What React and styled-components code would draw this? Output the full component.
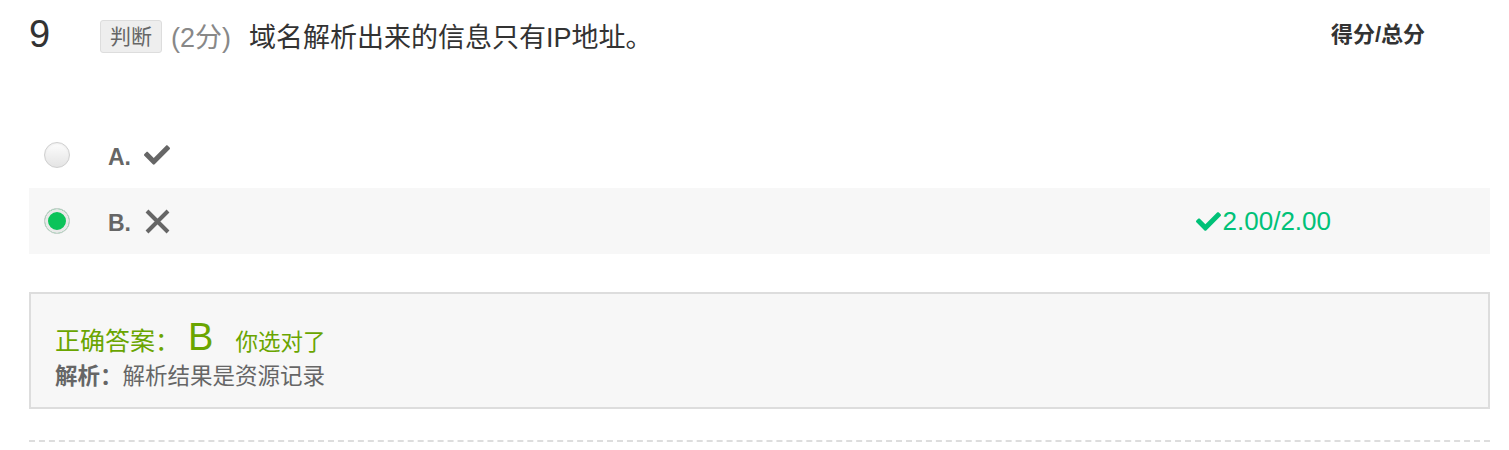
import React from 'react';
import styled, { createGlobalStyle } from 'styled-components';
import { FaCheck } from 'react-icons/fa';

const Global = createGlobalStyle`
  body {
    margin: 0;
    background: #fff;
    font-family: "Liberation Sans", "Noto Sans CJK SC", sans-serif;
  }
`;

const Wrap = styled.div`
  width: 1461px;
  margin-left: 29px;
`;

const Head = styled.div`
  display: flex;
  align-items: center;
  height: 40px;
  padding-top: 15px;
`;

const Num = styled.div`
  width: 71px;
  font-size: 38px;
  color: #333;
  line-height: 40px;
  margin-top: -2px;
`;

const Tag = styled.span`
  display: inline-block;
  font-size: 21px;
  line-height: 31px;
  padding: 0 9px;
  color: #666;
  background: #eee;
  border: 1px solid #ddd;
  border-radius: 3px;
  margin-right: 9px;
  margin-top: 3px;
`;

const Score = styled.span`
  font-size: 27px;
  color: #888;
  margin-right: 18px;
`;

const Title = styled.span`
  font-size: 27px;
  color: #333;
  flex: 1;
`;

const Total = styled.div`
  font-size: 22px;
  font-weight: bold;
  color: #333;
  margin-right: 65px;
  margin-top: -6px;
`;

const Options = styled.ul`
  list-style: none;
  margin: 67px 0 0;
  padding: 0;
`;

const Option = styled.li`
  display: flex;
  align-items: center;
  height: 66px;
  padding-left: 15px;
  background: ${p => (p.$shade ? '#f7f7f7' : 'transparent')};
`;

const Radio = styled.span`
  box-sizing: border-box;
  width: 26px;
  height: 26px;
  border-radius: 50%;
  border: 1px solid #cfcfcf;
  background: ${p => (p.$on ? '#0cc35a' : 'linear-gradient(#fdfdfd, #e4e4e4)')};
  box-shadow: ${p => (p.$on ? 'inset 0 0 0 3px #e9e9e9' : 'inset 0 1px 2px rgba(0,0,0,0.06)')};
  margin-right: 38px;
`;

const Letter = styled.span`
  font-size: 23px;
  font-weight: bold;
  color: #666;
  margin-right: 13px;
  padding-top: 4px;
`;

const Mark = styled.span`
  display: flex;
  color: #666;
  flex: 1;
`;

const Got = styled.div`
  display: flex;
  align-items: center;
  gap: 2px;
  font-size: 26px;
  color: #00c178;
  margin-right: 159px;
`;

const Answer = styled.div`
  margin-top: 38px;
  border: 2px solid #ddd;
  background: #f7f7f7;
  padding: 25px 24px 17px;
  height: 71px;
`;

const Right = styled.div`
  display: flex;
  align-items: baseline;
  color: #6aa500;
  font-size: 25px;
  line-height: 36px;
`;

const Big = styled.span`
  font-size: 38px;
  margin: 0 22px 0 8px;
`;

const Small = styled.span`
  font-size: 22.5px;
`;

const Explain = styled.div`
  font-size: 22.5px;
  color: #666;
  line-height: 32px;
  b {
    font-weight: bold;
  }
`;

const Dash = styled.div`
  margin-top: 31px;
  border-top: 2px dashed #ddd;
`;

const Cross = () => (
  <svg width="27" height="27" viewBox="0 0 27 27">
    <path d="M3 3 L24 24 M24 3 L3 24" stroke="#666" strokeWidth="4" />
  </svg>
);

export default function App() {
  return (
    <Wrap>
      <Global />
      <Head>
        <Num>9</Num>
        <Tag>判断</Tag>
        <Score>(2分)</Score>
        <Title>域名解析出来的信息只有IP地址。</Title>
        <Total>得分/总分</Total>
      </Head>
      <Options>
        <Option>
          <Radio />
          <Letter>A.</Letter>
          <Mark><FaCheck size={26} /></Mark>
        </Option>
        <Option $shade>
          <Radio $on />
          <Letter>B.</Letter>
          <Mark><Cross /></Mark>
          <Got><FaCheck size={25} />2.00/2.00</Got>
        </Option>
      </Options>
      <Answer>
        <Right>
          正确答案：<Big>B</Big><Small>你选对了</Small>
        </Right>
        <Explain><b>解析：</b>解析结果是资源记录</Explain>
      </Answer>
      <Dash />
    </Wrap>
  );
}
